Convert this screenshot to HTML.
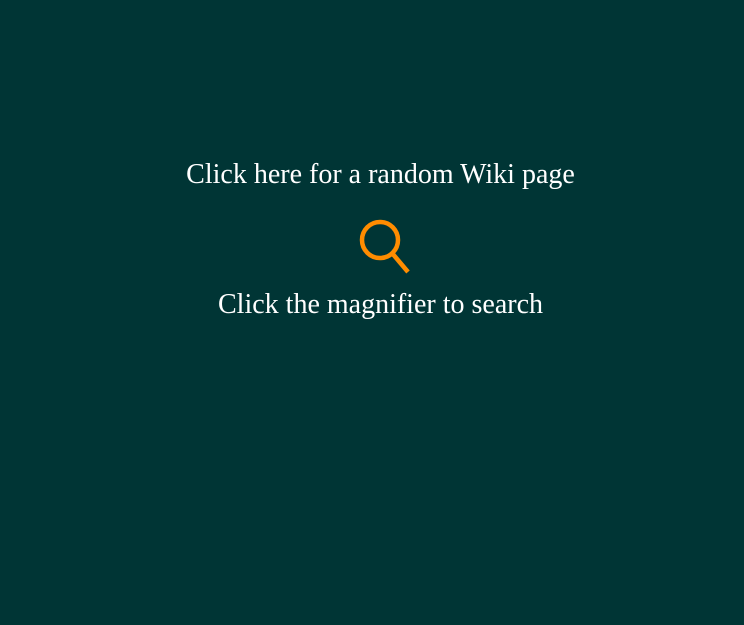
<!DOCTYPE html>
<html><head><style>
html,body{margin:0;padding:0;width:744px;height:625px;background:#003535;overflow:hidden}
.t{position:absolute;left:0;width:761px;text-align:center;color:#fff;font-family:"Liberation Serif",serif;font-size:28px;line-height:32px}
</style></head><body>
<div class="t" style="top:159px">Click here for a random Wiki page</div>
<svg style="position:absolute;left:355px;top:216px" width="60" height="62">
<circle cx="25" cy="24" r="18" fill="none" stroke="#ff8c00" stroke-width="4.5"/>
<line x1="37" y1="37" x2="53" y2="56" stroke="#ff8c00" stroke-width="4.5"/>
</svg>
<div class="t" style="top:289px">Click the magnifier to search</div>
</body></html>
